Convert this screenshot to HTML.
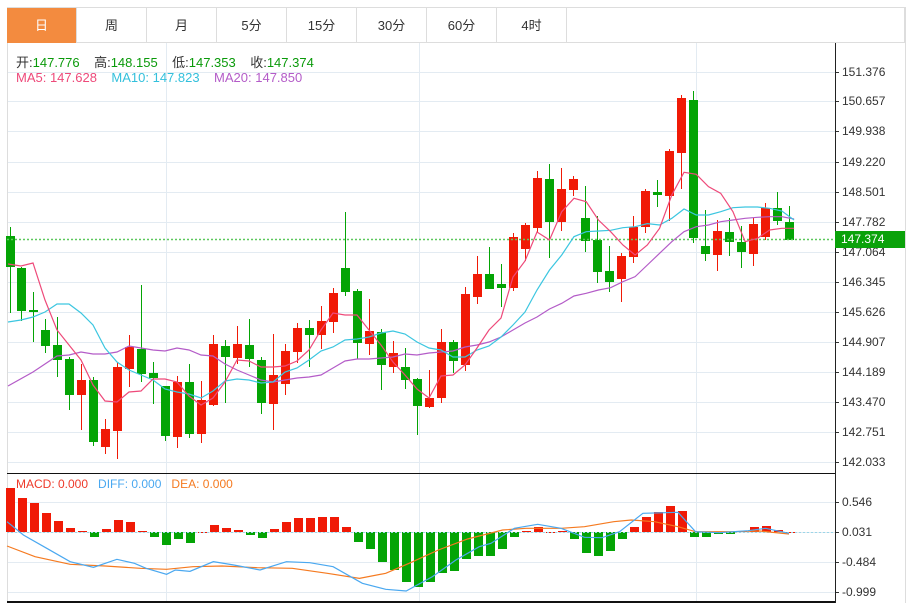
<!DOCTYPE html>
<html><head><meta charset="utf-8"><style>
body{margin:0;width:913px;height:603px;background:#fff;overflow:hidden;font-family:"Liberation Sans","Noto Sans CJK SC",sans-serif;position:relative}
.tabs{position:absolute;left:7px;top:7px;width:898px;height:36px;border-top:1px solid #ddd;border-bottom:1px solid #ddd;border-right:1px solid #ddd;box-sizing:border-box}
.tab{position:absolute;top:0;height:35px;width:70px;border-right:1px solid #ddd;box-sizing:border-box;text-align:center;line-height:35px;font-size:13px;color:#333}
.tab.on{background:#f38b3f;color:#fff}
.t{position:absolute;font-size:13px;white-space:nowrap}
.ax{position:absolute;left:842px;font-size:12px;color:#333}
svg{position:absolute;left:0;top:0}
</style></head><body>
<div class="tabs">
<div class="tab on" style="left:0">日</div><div class="tab" style="left:70px">周</div><div class="tab" style="left:140px">月</div><div class="tab" style="left:210px">5分</div><div class="tab" style="left:280px">15分</div><div class="tab" style="left:350px">30分</div><div class="tab" style="left:420px">60分</div><div class="tab" style="left:490px">4时</div>
</div>
<svg id="s" width="913" height="603"></svg>
<div class="t" style="left:16px;top:52px;color:#333;word-spacing:0">开:<span style="color:#0a9a0a">147.776</span>&nbsp;&nbsp;&nbsp; 高:<span style="color:#0a9a0a">148.155</span>&nbsp;&nbsp;&nbsp; 低:<span style="color:#0a9a0a">147.353</span>&nbsp;&nbsp;&nbsp; 收:<span style="color:#0a9a0a">147.374</span></div>
<div class="t" style="left:16px;top:70px"><span style="color:#ee4a7a">MA5: 147.628</span>&nbsp;&nbsp;&nbsp; <span style="color:#33c0dc">MA10: 147.823</span>&nbsp;&nbsp;&nbsp; <span style="color:#b45cc8">MA20: 147.850</span></div>
<div class="t" style="left:16px;top:477px;font-size:12px"><span style="color:#ee3a2a">MACD: 0.000</span>&nbsp;&nbsp; <span style="color:#4aa8f0">DIFF: 0.000</span>&nbsp;&nbsp; <span style="color:#f57a20">DEA: 0.000</span></div>
<div class="ax" style="top:65px">151.376</div><div class="ax" style="top:94px">150.657</div><div class="ax" style="top:124px">149.938</div><div class="ax" style="top:155px">149.220</div><div class="ax" style="top:185px">148.501</div><div class="ax" style="top:215px">147.782</div><div class="ax" style="top:245px">147.064</div><div class="ax" style="top:275px">146.345</div><div class="ax" style="top:305px">145.626</div><div class="ax" style="top:335px">144.907</div><div class="ax" style="top:365px">144.189</div><div class="ax" style="top:395px">143.470</div><div class="ax" style="top:425px">142.751</div><div class="ax" style="top:455px">142.033</div>
<div style="position:absolute;left:835px;top:231px;width:70px;height:17px;background:#0aa20a;color:#fff;font-size:12px;line-height:17px;padding-left:6px;box-sizing:border-box">147.374</div>
<div class="ax" style="top:495px">0.546</div><div class="ax" style="top:525px">0.031</div><div class="ax" style="top:555px">-0.484</div><div class="ax" style="top:585px">-0.999</div>
<script>
var s=document.getElementById('s'),h='';
function L(x1,y1,x2,y2,c,w,d){h+='<line x1="'+x1+'" y1="'+y1+'" x2="'+x2+'" y2="'+y2+'" stroke="'+c+'" stroke-width="'+(w||1)+'"'+(d?' stroke-dasharray="'+d+'"':'')+'/>';}
var gy=[72,101,131,162,192,222,252,282,312,342,372,402,432,462];
gy.forEach(function(y){L(7,y+.5,835,y+.5,'#e3ebf2');L(835,y+.5,839,y+.5,'#333');});
[502,532,562,592].forEach(function(y){L(7,y+.5,835,y+.5,'#e3ebf2');L(835,y+.5,839,y+.5,'#333');});
[166,419,696].forEach(function(x){L(x+.5,43,x+.5,602,'#e3ebf2');});
L(7.5,43,7.5,603,'#ddd');L(905.5,7,905.5,603,'#ddd');
L(7,473.5,835,473.5,'#111');L(7,602,835,602,'#111',2);L(835.5,43,835.5,603,'#222');
var C=[[10,'g',236,267,227,313],[21,'g',268,311,267,321],[33,'g',310,312,292,342],[45,'g',330,346,319,353],[57,'g',345,360,317,377],[69,'g',359,395,357,410],[81,'r',380,395,364,430],[93,'g',380,442,377,446],[105,'r',429,447,419,454],[117,'r',367,431,362,459],[129,'r',347,369,335,387],[141,'g',349,374,285,382],[153,'g',373,378,362,404],[165,'g',386,436,386,441],[177,'r',382,437,376,448],[189,'g',382,434,364,438],[201,'r',400,434,381,443],[213,'r',344,405,335,406],[225,'g',346,357,340,403],[237,'r',344,358,326,364],[249,'g',345,359,319,367],[261,'g',360,403,357,414],[273,'r',375,404,334,430],[285,'r',351,384,344,395],[297,'r',328,352,323,363],[309,'g',328,335,320,367],[321,'r',321,335,306,349],[333,'r',293,322,288,333],[345,'g',268,292,212,296],[357,'g',291,343,289,359],[369,'r',331,344,299,355],[381,'g',332,365,329,390],[393,'r',353,367,341,373],[405,'g',367,380,348,389],[417,'g',379,406,378,435],[429,'r',398,407,370,408],[441,'r',342,398,329,403],[453,'g',342,361,340,373],[465,'r',294,365,287,371],[477,'r',274,297,256,304],[489,'g',274,289,247,289],[501,'g',284,288,264,307],[513,'r',237,288,233,291],[525,'r',225,249,223,261],[537,'r',178,228,171,232],[549,'g',179,222,164,258],[561,'r',189,222,168,231],[573,'r',179,190,176,196],[585,'g',218,241,186,252],[597,'g',240,272,216,283],[609,'g',271,282,246,292],[621,'r',256,279,253,302],[633,'r',227,257,216,263],[645,'r',191,227,189,233],[657,'g',192,195,180,207],[669,'r',151,196,149,221],[681,'r',98,153,95,189],[693,'g',100,238,91,243],[705,'g',246,254,210,261],[717,'r',231,255,220,271],[729,'g',232,242,218,256],[741,'g',242,252,226,268],[753,'r',224,254,218,266],[765,'r',208,237,203,240],[777,'g',208,221,192,225],[789,'g',222,240,206,240]];
C.forEach(function(c){var col=c[1]=='r'?'#f01a06':'#04a405';L(c[0]+.5,c[4],c[0]+.5,c[5],col);h+='<rect x="'+(c[0]-4)+'" y="'+c[2]+'" width="9" height="'+Math.max(1,c[3]-c[2])+'" fill="'+col+'"/>';});
L(7,239.5,835,239.5,'#5cc85c',1.5,'2,2');
function P(pts,c){h+='<polyline fill="none" stroke="'+c+'" stroke-width="1.2" points="'+pts.map(function(p){return p.join(',')}).join(' ')+'"/>';}
function z5(a){return a.map(function(p){return [540+p[0]/2.944,85+p[1]/3];});}
var zx=[0,28,64,100,136,172,208,244,280,316,352,388,424,460,496,532,568,604,640,676,712,748];
function mk(ys,skip){return z5(ys.map(function(y,i){return [zx[i+(skip||0)],y];}));}
var ma5=[[8,264],[21,266],[33,263],[45,300],[57,330],[69,345],[81,360],[93,385],[105,401],[117,402],[129,392],[141,391],[153,379],[165,379],[177,382],[189,396],[201,405],[213,398],[225,382],[237,360],[249,361],[261,367],[273,367],[285,366],[297,361],[309,350],[321,330],[333,313],[345,315],[357,315],[369,330],[381,345],[393,362],[405,375],[417,389],[429,398],[441,376],[453,375],[465,365],[477,348],[489,330],[501,318],[513,277],[525,261]].concat(mk([465,380,340,350,405,440,480,510,480,430,330,262,268,305,325,380,470,460,435,430,430],1).slice(0));
ma5.splice(44,0,[537,232]);
var ma10=[[8,322],[21,320],[33,317],[45,312],[57,304],[69,304],[81,313],[93,325],[105,348],[117,362],[129,370],[141,375],[153,380],[165,389],[177,392],[189,394],[201,398],[213,391],[225,381],[237,379],[249,380],[261,383],[273,382],[285,372],[297,368],[309,360],[321,351],[333,347],[345,340],[357,339],[369,337],[381,333],[393,331],[405,334],[417,342],[429,348],[441,350],[453,357],[465,357],[477,350],[489,346],[501,337],[513,325],[525,312],[537,290]].concat(mk([555,510,455,440,438,436,428,425,416,420,400,372,390,390,380,368,366,366,370,378,405],1));
var ma20=[[8,386],[33,372],[57,356],[69,355],[81,352],[93,354],[105,354],[117,352],[129,346],[141,348],[153,350],[165,351],[177,348],[189,350],[201,355],[213,356],[225,364],[237,370],[249,375],[261,380],[273,382],[285,380],[297,378],[309,377],[321,375],[333,368],[345,361],[357,359],[369,359],[381,358],[393,357],[405,354],[417,355],[429,353],[441,352],[453,351],[465,347],[477,345],[489,342],[501,337],[513,330],[525,323],[537,317]].concat(mk([672,655,633,625,615,608,590,575,540,505,470,440,425,420,410,405,400,397,395,395,402],1));
P(ma20,'#b45cc8');P(ma10,'#3cc6e0');P(ma5,'#ee4a7a');
var M=[[488,'r'],[498,'r'],[503,'r'],[513,'r'],[521,'r'],[528,'r'],[531,'r'],[537,'g'],[529,'r'],[520,'r'],[522,'r'],[531,'r'],[537,'g'],[545,'g'],[539,'g'],[543,'g'],[532,'r'],[525,'r'],[528,'r'],[530,'r'],[535,'g'],[538,'g'],[529,'r'],[522,'r'],[518,'r'],[518,'r'],[517,'r'],[517,'r'],[527,'r'],[542,'g'],[549,'g'],[562,'g'],[570,'g'],[582,'g'],[587,'g'],[582,'g'],[573,'g'],[571,'g'],[559,'g'],[556,'g'],[556,'g'],[549,'g'],[537,'g'],[531,'r'],[527,'r'],[532,'r'],[531,'r'],[539,'g'],[553,'g'],[556,'g'],[551,'g'],[539,'g'],[527,'r'],[517,'r'],[512,'r'],[506,'r'],[511,'r'],[537,'g'],[537,'g'],[534,'g'],[534,'g'],[531,'r'],[527,'r'],[526,'r'],[530,'r'],[532,'r']];
M.forEach(function(m,i){var x=10+12*i,z=532,col=m[1]=='r'?'#f01a06':'#04a405';var y1=Math.min(z,m[0]),y2=Math.max(z,m[0]);h+='<rect x="'+(x-4)+'" y="'+y1+'" width="9" height="'+Math.max(1,y2-y1)+'" fill="'+col+'"/>';});
L(7,532.5,835,532.5,'#9cd6e8',1,'2,2');
function z2(a){return a.map(function(p){return [p[0]/1.711,460+p[1]/3];});}
P(z2([[12,258],[60,290],[120,313],[180,318],[240,325],[285,328],[330,320],[380,318],[440,323],[500,325],[560,340],[615,355],[660,340],[700,310],[750,270],[800,237],[860,210],[900,205],[960,205],[1000,200],[1050,185],[1080,180],[1120,185],[1160,200],[1190,215],[1250,215],[1300,213],[1350,222]]),'#f57a20');
P(z2([[12,185],[40,225],[80,265],[120,305],[160,322],[200,298],[230,310],[250,325],[285,343],[300,330],[325,334],[365,305],[400,315],[445,330],[490,305],[530,308],[570,320],[600,350],[620,370],[660,388],[695,393],[740,350],[780,300],[820,260],[840,250],[880,205],[920,193],[960,205],[1000,232],[1030,233],[1060,215],[1100,160],[1160,157],[1190,215],[1230,218],[1280,212],[1310,205],[1350,220]]),'#4aa8f0');
s.innerHTML=h;
</script>
</body></html>
